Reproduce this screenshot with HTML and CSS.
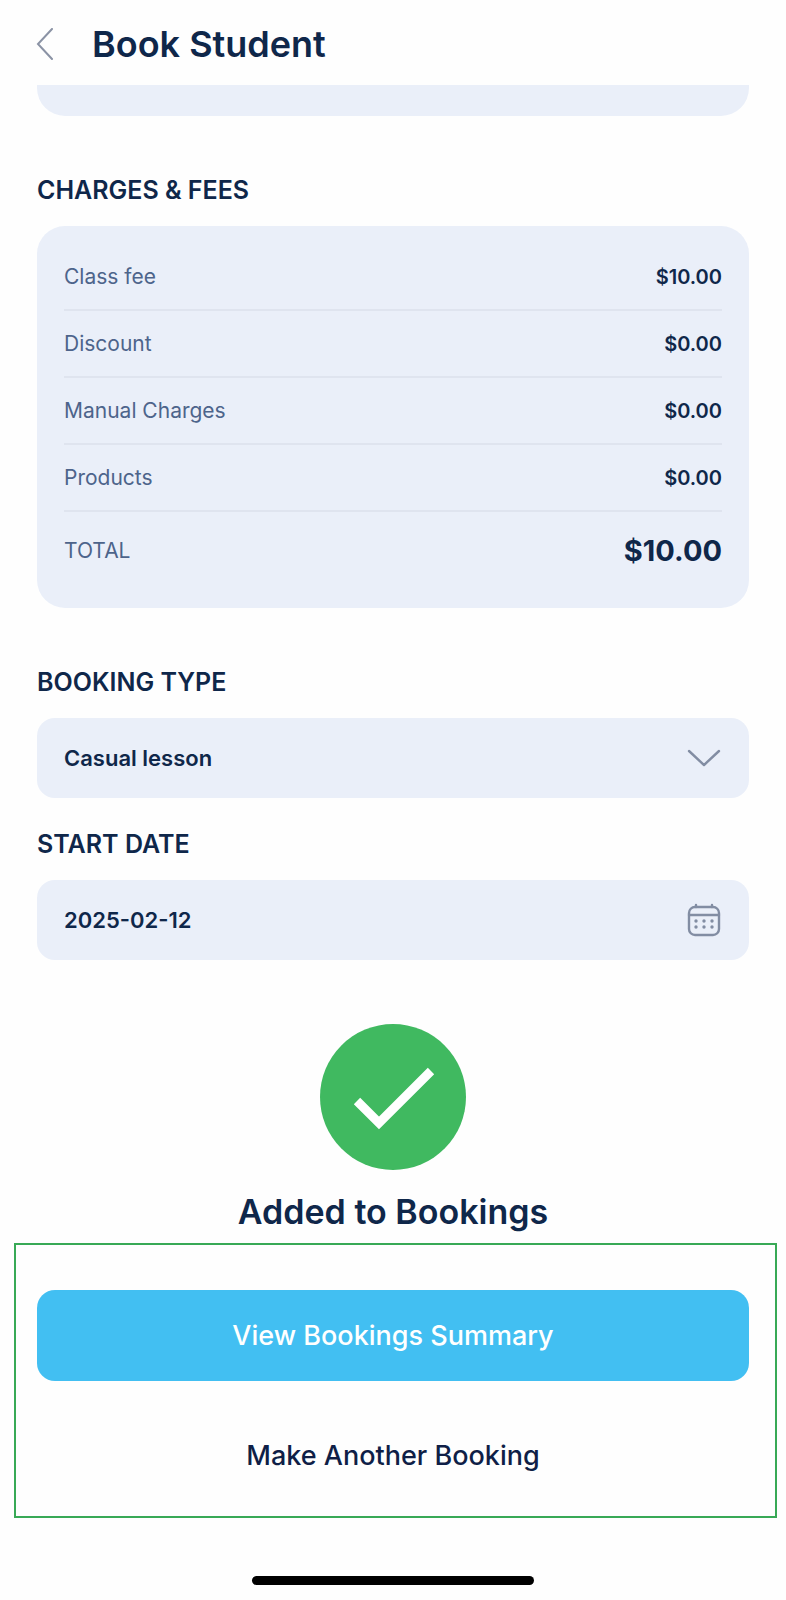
FILE: index.html
```html
<!DOCTYPE html>
<html lang="en">
<head>
    <meta charset="UTF-8">
    <meta name="viewport" content="width=device-width, initial-scale=1.0">
    <title>Book Student</title>
    <link rel="stylesheet" href="styles.css">
</head>

<body>
    <header class="header">
        <button class="back" type="button" aria-label="Back">
            <svg width="18" height="32" viewBox="0 0 18 32"><path d="M16 1 L2 16 L16 31"/></svg>
        </button>
        <h1>Book Student</h1>
    </header>

    <main>
        <form class="form">
            <!-- End of the card scrolled under the header -->
            <div class="card-end"></div>

            <h2>CHARGES &amp; FEES</h2>
            <div class="card">
                <table class="charges">
                    <tbody>
                        <tr><th scope="row">Class fee</th><td>$10.00</td></tr>
                        <tr><th scope="row">Discount</th><td>$0.00</td></tr>
                        <tr><th scope="row">Manual Charges</th><td>$0.00</td></tr>
                        <tr><th scope="row">Products</th><td>$0.00</td></tr>
                    </tbody>
                    <tfoot>
                        <tr><th scope="row">TOTAL</th><td>$10.00</td></tr>
                    </tfoot>
                </table>
            </div>

            <label class="label" for="booking-type">BOOKING TYPE</label>
            <div class="field">
                <select id="booking-type">
                    <option>Casual lesson</option>
                </select>
                <svg class="icon" width="34" height="34" viewBox="0 0 34 34"><path d="M2 10 L17 24 L32 10"/></svg>
            </div>

            <label class="label label-close" for="start-date">START DATE</label>
            <div class="field">
                <input id="start-date" type="text" value="2025-02-12">
                <svg class="icon" width="34" height="34" viewBox="0 0 34 34">
                    <rect x="2" y="4" width="30" height="28" rx="6"/>
                    <path d="M2 12 H32 M9 2 V4 M25 2 V4"/>
                    <g class="dots">
                        <circle cx="9" cy="18" r="1.7"/><circle cx="17" cy="18" r="1.7"/><circle cx="25" cy="18" r="1.7"/>
                        <circle cx="9" cy="24" r="1.7"/><circle cx="17" cy="24" r="1.7"/><circle cx="25" cy="24" r="1.7"/>
                    </g>
                </svg>
            </div>
        </form>

        <div class="success">
            <svg width="146" height="146" viewBox="0 0 146 146">
                <circle class="disc" cx="73" cy="73" r="73"/>
                <path class="tick" d="M37 77 L59 99 L111 47"/>
            </svg>
            <p>Added to Bookings</p>
        </div>

        <div class="actions">
            <button class="btn btn-primary" type="button">View Bookings Summary</button>
            <button class="btn" type="button">Make Another Booking</button>
        </div>
    </main>

    <div class="home-bar"></div>
</body>
</html>
```

FILE: styles.css
```css
* {
    box-sizing: border-box;
}

body {
    margin: 0;
    font-family: Inter, "Open Sans", sans-serif;
    background-color: #fefefe;
    color: #0f274a;
}

svg {
    display: block;
    fill: none;
}

.header {
    display: flex;
    align-items: center;
    gap: 38px;
    height: 85px;
    padding: 2px 36px 0;
}

.back {
    padding: 0;
    border: none;
    background: none;
    cursor: pointer;
}

.back svg {
    stroke: #8b93a5;
    stroke-width: 2;
    stroke-linecap: round;
}

h1 {
    margin: 0;
    font-size: 36px;
    font-weight: 600;
    line-height: 40px;
}

.form {
    padding: 0 37px;
}

.card-end {
    height: 31px;
    border-radius: 0 0 28px 28px;
    background-color: #eaeff9;
}

h2, .label {
    display: block;
    margin: 58px 0 20px;
    font-size: 25px;
    font-weight: 600;
    line-height: 32px;
}

.label-close {
    margin-top: 30px;
}

.card {
    padding: 18px 27px 20px;
    border-radius: 28px;
    background-color: #eaeff9;
}

.charges {
    width: 100%;
    border-collapse: separate;
    border-spacing: 0;
    font-size: 21px;
}

.charges th, .charges td {
    height: 67px;
    padding: 0;
    border-bottom: 2px solid #dfe4ef;
}

.charges th {
    text-align: left;
    font-weight: 400;
    color: #4d648b;
}

.charges td {
    text-align: right;
    font-size: 20px;
    font-weight: 600;
}

.charges tfoot th, .charges tfoot td {
    height: 76px;
    border-bottom: none;
}

.charges tfoot td {
    font-size: 29px;
    font-weight: 700;
}

.field {
    display: grid;
    align-items: center;
}

.field select, .field input, .icon {
    grid-area: 1 / 1;
}

.field select, .field input {
    width: 100%;
    height: 80px;
    padding: 0 70px 0 27px;
    border: none;
    border-radius: 18px;
    appearance: none;
    background-color: #eaeff9;
    font-family: inherit;
    font-size: 22px;
    font-weight: 600;
    color: inherit;
}

.icon {
    justify-self: end;
    margin-right: 28px;
    stroke: #828da3;
    stroke-width: 2.4;
    stroke-linecap: round;
    stroke-linejoin: round;
    pointer-events: none;
}

.dots {
    fill: #828da3;
    stroke: none;
}

.success {
    display: flex;
    flex-direction: column;
    align-items: center;
    gap: 21px;
    margin: 64px 0 10px;
}

.disc {
    fill: #40b960;
}

.tick {
    stroke: #fff;
    stroke-width: 9;
}

.success p {
    margin: 0;
    font-size: 34px;
    font-weight: 600;
    line-height: 42px;
}

.actions {
    display: flex;
    flex-direction: column;
    gap: 29px;
    margin: 0 9px 0 14px;
    padding: 45px 26px 15px 21px;
    border: 2px solid #38a956;
}

.btn {
    height: 91px;
    border: none;
    border-radius: 18px;
    background: none;
    font-family: inherit;
    font-size: 27px;
    font-weight: 500;
    color: #0f1f47;
    cursor: pointer;
}

.btn-primary {
    background-color: #42bff2;
    color: #fff;
}

.home-bar {
    width: 36%;
    height: 9px;
    margin: 58px auto 14px;
    border-radius: 5px;
    background-color: #000;
}
```
